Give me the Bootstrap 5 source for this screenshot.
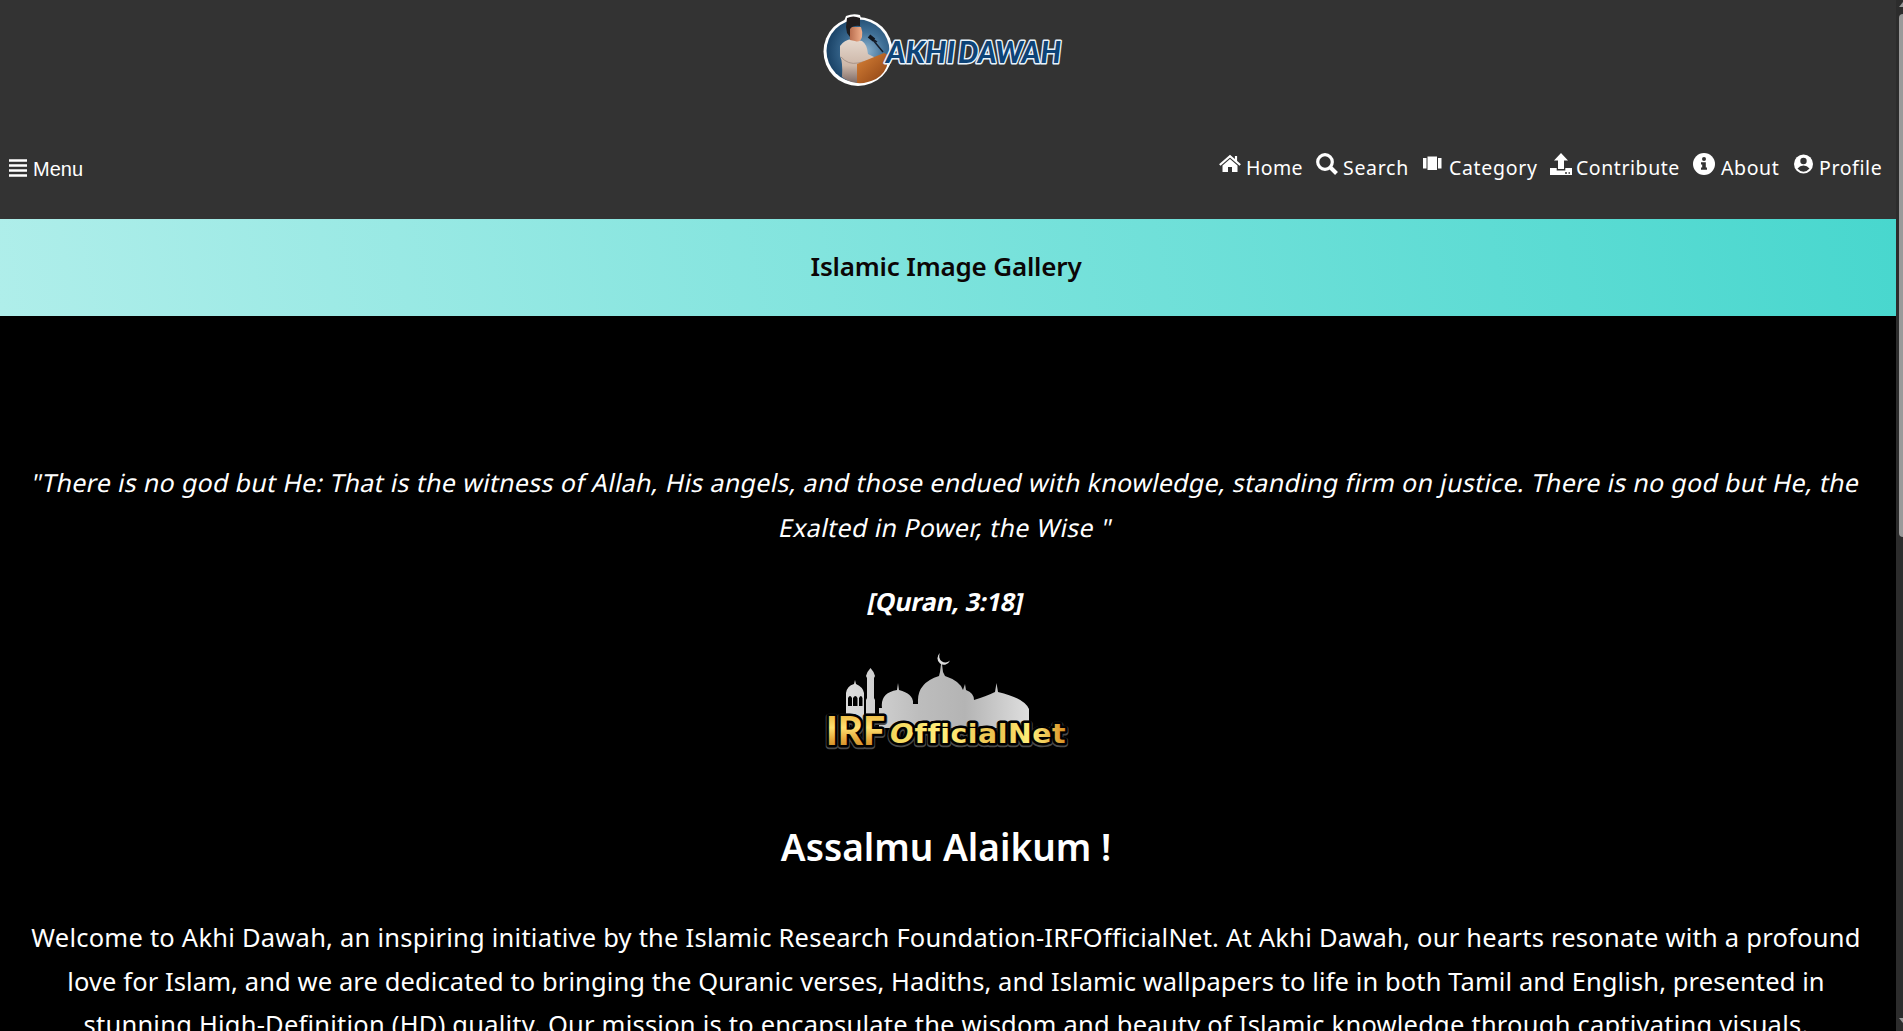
<!DOCTYPE html>
<html lang="en">
<head>
<meta charset="utf-8">
<meta name="viewport" content="width=device-width, initial-scale=1">
<title>Islamic Image Gallery</title>
<link href="https://cdn.jsdelivr.net/npm/bootstrap@5.3.0/dist/css/bootstrap.min.css" rel="stylesheet">
<style>
  body { background: #000; color: #fff; font-family: "Noto Sans", sans-serif; overflow: hidden; }
  .page { width: 1896px; }
  .site-head { background: #333; height: 219px; }
  .brand-art, .irf-art { width: 296px; display: block; margin: 0 auto; }
  .top-row { height: 60px; margin-top: 38px; padding: 0 13px 0 9px; }
  .menu-btn { font: 20px "Liberation Sans", sans-serif; padding-top: 3px; }
  .menu-btn svg { margin: -4px 6px 0 0; }
  .top-link { font-size: 19.5px; color: #fff; text-decoration: none; white-space: nowrap; }
  .top-link svg { margin-top: -9px; flex: none; }
  .top-link span { display: inline-block; }
  .w-home { width: 70px; letter-spacing: .35px; margin-left: 5px; }
  .w-search { width: 79px; letter-spacing: .7px; margin-left: 5px; }
  .w-category { width: 101px; letter-spacing: .68px; margin-left: 7px; }
  .w-contribute { width: 117px; letter-spacing: .55px; margin-left: 4px; }
  .w-about { width: 73px; letter-spacing: .6px; margin-left: 6px; }
  .w-profile { width: 64px; letter-spacing: .62px; margin-left: 6px; }
  .title-band { height: 97px; background: linear-gradient(80deg, #afeeea, #48d7ce); color: #0c0606; padding: 0 4px 1px 0; }
  .title-band h1 { font-size: 26px; font-weight: 600; letter-spacing: -.18px; margin: 0; }
  .copy { padding-right: 4px; }
  .verse { margin: 144px 0 29px; font-size: 25px; line-height: 45px; }
  .line { display: block; white-space: nowrap; }
  .slant { transform: skewX(-12deg); }
  .source { font-size: 25px; line-height: 45px; font-weight: 700; letter-spacing: -.2px; margin: 0 0 16px; }
  .greet { font-size: 37px; line-height: 60px; font-weight: 600; margin: 57px 0 39px; }
  .intro { font-size: 25.5px; line-height: 43.5px; margin: 0; }
  .v1 { letter-spacing: .32px; } .v2 { letter-spacing: .4px; }
  .i1 { letter-spacing: .235px; } .i2 { letter-spacing: .1px; } .i3 { letter-spacing: .22px; }
  .scroll-track { width: 7px; background: #2c2c2c; }
  .scroll-thumb { width: 4px; height: 523px; background: #9a9a9a; border-radius: 4px 0 0 4px; }
</style>
</head>
<body class="d-flex vh-100">
<div class="page flex-shrink-0 vh-100 overflow-hidden text-center">
  <header class="site-head">
    <svg class="brand-art" height="100" viewBox="0 0 296 100">
      <defs>
        <radialGradient id="sky" cx=".62" cy=".5" r=".6"><stop offset="0" stop-color="#8db4d0"/><stop offset=".5" stop-color="#3f6f96"/><stop offset="1" stop-color="#1b4468"/></radialGradient>
        <linearGradient id="wood" x2="1" y2="1"><stop offset="0" stop-color="#d98338"/><stop offset="1" stop-color="#8a3f12"/></linearGradient>
        <linearGradient id="robe" x2="0" y2="1"><stop offset="0" stop-color="#e6d9cf"/><stop offset=".6" stop-color="#cdb7a8"/><stop offset="1" stop-color="#7d6a66"/></linearGradient>
        <linearGradient id="skin" x2="1"><stop offset="0" stop-color="#b5694a"/><stop offset="1" stop-color="#f2b08c"/></linearGradient>
      </defs>
      <circle cx="58" cy="51.500" r="34.500" fill="#fff"/><path d="M43 24L46 16Q53 13 60 15L63 24Z" fill="#fff"/>
      <circle cx="58" cy="51" r="31.500" fill="url(#sky)"/>
      <path d="M40 46Q44 40 52 39L62 41Q67 44 68 54L78 59L74 63L58 66L57 83Q48 82 42 77Q43 62 40 56Z" fill="url(#robe)"/>
      <path d="M41 57Q48 65 58 63L72 60" fill="none" stroke="#a99488"/>
      <path d="M49 27H61Q63 32 62 37Q60 43 55 41L50 40Z" fill="url(#skin)"/>
      <path d="M46 27L47 18Q53 15 60 18L60 26Q53 25 50 29V37L47 33Z" fill="#201c1d"/>
      <path d="M57 64L84 53Q91 55 88 62Q86 73 76 79Q66 84 57 83Z" fill="url(#wood)"/>
      <path d="M70 37L77 42M73 40L83 52" fill="none" stroke="#151d2b" stroke-width="1.500"/><path d="M69 36L74 40" stroke="#10151e" stroke-width="4"/>
      <g font-family="Lato, sans-serif" font-weight="900" font-style="italic" font-size="31" fill="#0d4377" stroke="#e9f3fb" stroke-width="3" stroke-linejoin="round" paint-order="stroke">
        <text x="86" y="63" textLength="69" lengthAdjust="spacingAndGlyphs">AKHI</text>
        <text x="158" y="63" textLength="103" lengthAdjust="spacingAndGlyphs">DAWAH</text>
      </g>
    </svg>
    <nav class="top-row d-flex align-items-center justify-content-between">
      <div class="menu-btn d-flex align-items-center">
        <svg width="18" height="18" viewBox="0 0 18 18" stroke="#fff" stroke-width="2.300"><path d="M0 1.500H18M0 6.500H18M0 11.500H18M0 16.500H18"/></svg><span>Menu</span>
      </div>
      <div class="d-flex align-items-center text-start">
        <a class="top-link d-flex align-items-center" href="#"><svg width="22" height="20" viewBox="0 0 22 20" fill="#fff"><path d="M11 5L18.500 11.500V18H13V13H9V18H3.500V11.500Z"/><path d="M.8 11L11 2.200L21.200 11M17 2V7" fill="none" stroke="#fff" stroke-width="2.200"/></svg><span class="w-home">Home</span></a>
        <a class="top-link d-flex align-items-center" href="#"><svg width="22" height="22" viewBox="0 0 22 22" fill="none" stroke="#fff"><circle cx="9" cy="9" r="7.300" stroke-width="3.200"/><path d="M14 14L20.500 20.500" stroke-width="4"/></svg><span class="w-search">Search</span></a>
        <a class="top-link d-flex align-items-center" href="#"><svg width="20" height="20" viewBox="0 0 20 20" fill="#fff"><path d="M5.500 2.500H15V16H5.500ZM1 4H4.500V14.500H1ZM16 4H19.500V14.500H16Z"/></svg><span class="w-category">Category</span></a>
        <a class="top-link d-flex align-items-center" href="#"><svg width="22" height="22" viewBox="0 0 22 22" fill="#fff"><path d="M11 0L18 7.500H14V16H8V7.500H4Z"/><path d="M0 15H6.700V17.500H15.300V15H22V22H0Z"/><path d="M15 20H17M18.500 20H20" stroke="#333" stroke-width="1.500"/></svg><span class="w-contribute">Contribute</span></a>
        <a class="top-link d-flex align-items-center" href="#"><svg width="22" height="22" viewBox="0 0 22 22"><circle cx="11" cy="11" r="11" fill="#fff"/><circle cx="11" cy="6" r="2" fill="#333"/><path d="M8 9.200H12.800V14.500H14V16.700H8V14.500H9.200V11.400H8Z" fill="#333"/></svg><span class="w-about">About</span></a>
        <a class="top-link d-flex align-items-center" href="#"><svg width="19" height="22" viewBox="0 0 19 22"><circle cx="9.500" cy="11" r="9.500" fill="#fff"/><circle cx="9.500" cy="8" r="3.200" fill="#333"/><path d="M3.500 15.500Q6 12.500 9.500 12.500T15.500 15.500Q13 18.700 9.500 18.700T3.500 15.500Z" fill="#333"/></svg><span class="w-profile">Profile</span></a>
      </div>
    </nav>
  </header>
  <section class="title-band d-flex align-items-center justify-content-center"><h1>Islamic Image Gallery</h1></section>
  <main class="copy">
    <p class="verse"><span class="line slant v1">"There is no god but He: That is the witness of Allah, His angels, and those endued with knowledge, standing firm on justice. There is no god but He, the</span><span class="line slant v2">Exalted in Power, the Wise "</span></p>
    <p class="source slant">[Quran, 3:18]</p>
    <svg class="irf-art" height="120" viewBox="-2 0 296 120">
      <defs>
        <linearGradient id="silver" x1="0" x2="1"><stop offset="0" stop-color="#dcdcdc"/><stop offset=".4" stop-color="#bdbdbd"/><stop offset=".65" stop-color="#b4b4b4"/><stop offset="1" stop-color="#dedede"/></linearGradient>
        <linearGradient id="gold" x2="0" y2="1"><stop offset="0" stop-color="#e5a62a"/><stop offset=".45" stop-color="#ffe070"/><stop offset=".7" stop-color="#e6a93c"/><stop offset="1" stop-color="#c07816"/></linearGradient>
        <linearGradient id="goldwide" x2="1"><stop offset="0" stop-color="#f3d55a"/><stop offset=".3" stop-color="#fff07c"/><stop offset=".6" stop-color="#ecc04c"/><stop offset=".8" stop-color="#fff07c"/><stop offset="1" stop-color="#d88f22"/></linearGradient>
      </defs>
      <path fill="url(#silver)" d="M46 80V53Q47 46 54 44L55 40L56 44Q63 47 64 53V80ZM66 80V60L67 58V38L66 36L67.500 32L70.500 28L73.500 32L75 36L74 38V58L75 60V80ZM79 88V68H82Q80 53 97 50L98 43L99 50Q114 54 113 64H118V62Q117 43 139 36L140 32L141 24H142L143 32L145 36Q160 41 163 50L165 44L166 50Q174 53 174 60Q187 56 195 52L196.500 43L198 52Q224 58 229 69V88Z"/>
      <path fill="#000" d="M48 66V58Q50 54 52 58V66ZM53 66V58Q55.500 54 57.500 58V66ZM59 66V58Q61 54 62.500 58V66Z"/>
      <path d="M140 13A6.500 6.500 0 1 0 150 20.500A6.300 6.300 0 0 1 140 13Z" fill="#ddd"/>
      <g font-weight="bold" stroke-linejoin="round" paint-order="stroke">
        <g fill="none" stroke="#4a4a4a" stroke-width="6.500">
          <text x="26" y="106" textLength="59" lengthAdjust="spacingAndGlyphs" font-family="Lato, sans-serif" font-weight="900" font-size="39">IRF</text>
          <text x="90" y="104" textLength="176" lengthAdjust="spacingAndGlyphs" font-family="DejaVu Sans, sans-serif" font-size="26" letter-spacing=".5"><tspan font-style="italic">O</tspan>fficialNet</text>
        </g>
        <g stroke="#000" stroke-width="5">
          <text x="26" y="105" textLength="59" lengthAdjust="spacingAndGlyphs" font-family="Lato, sans-serif" font-weight="900" font-size="39" fill="url(#gold)">IRF</text>
          <text x="90" y="103" textLength="176" lengthAdjust="spacingAndGlyphs" font-family="DejaVu Sans, sans-serif" font-size="26" letter-spacing=".5" fill="url(#goldwide)"><tspan font-style="italic">O</tspan>fficialNet</text>
        </g>
      </g>
    </svg>
    <h2 class="greet">Assalmu Alaikum !</h2>
    <p class="intro"><span class="line i1">Welcome to Akhi Dawah, an inspiring initiative by the Islamic Research Foundation-IRFOfficialNet. At Akhi Dawah, our hearts resonate with a profound</span><span class="line i2">love for Islam, and we are dedicated to bringing the Quranic verses, Hadiths, and Islamic wallpapers to life in both Tamil and English, presented in</span><span class="line i3">stunning High-Definition (HD) quality. Our mission is to encapsulate the wisdom and beauty of Islamic knowledge through captivating visuals.</span></p>
  </main>
</div>
<div class="scroll-track vh-100 d-flex flex-column align-items-end">
  <svg width="4" height="14" viewBox="0 0 4 14"><path d="M4 2V7H0Z" fill="#9a9a9a"/></svg>
  <div class="scroll-thumb"></div>
  <svg class="mt-auto" width="4" height="14" viewBox="0 0 4 14"><path d="M0 1H4V6Z" fill="#9a9a9a"/></svg>
</div>
<script src="https://cdn.jsdelivr.net/npm/bootstrap@5.3.0/dist/js/bootstrap.bundle.min.js"></script>
</body>
</html>
